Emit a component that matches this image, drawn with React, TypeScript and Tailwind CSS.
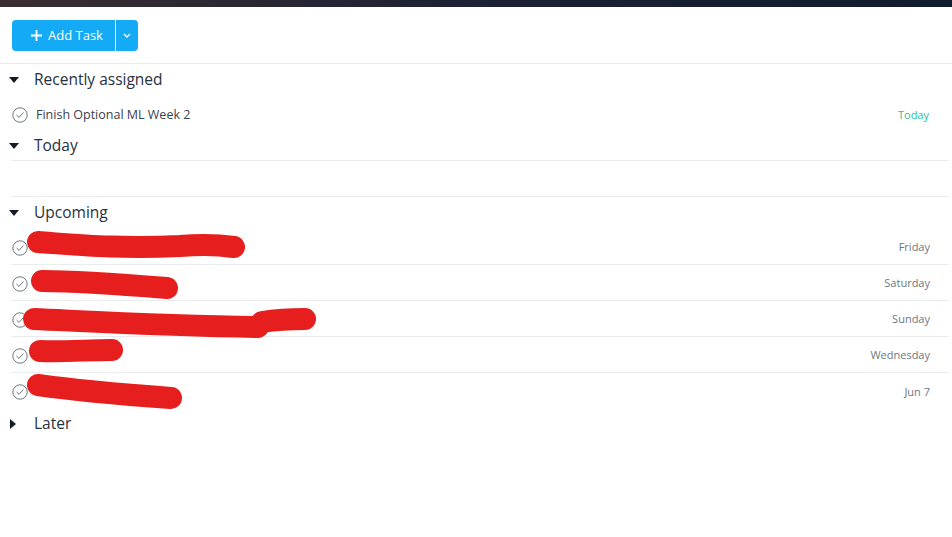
import React from "react";

const font = { fontFamily: '"Open Sans", "Noto Sans", sans-serif' };

function CheckCircle() {
  return (
    <svg width="16" height="16" viewBox="0 0 16 16" className="shrink-0">
      <circle cx="8" cy="8" r="7.2" fill="none" stroke="#6f7782" strokeWidth="1" />
      <path d="M4.8 8.3 L7 10.4 L11.2 5.8" fill="none" stroke="#6f7782" strokeWidth="1" strokeLinecap="round" strokeLinejoin="round" />
    </svg>
  );
}

function Caret({ open }: { open: boolean }) {
  return (
    <div className="w-[34px] flex items-center pl-[9px] shrink-0">
      {open ? (
        <svg width="10" height="6" viewBox="0 0 10 6">
          <path d="M0 0 L10 0 L5 6 Z" fill="#151b26" />
        </svg>
      ) : (
        <svg width="6" height="10" viewBox="0 0 6 10" className="ml-[1px]">
          <path d="M0 0 L6 5 L0 10 Z" fill="#151b26" />
        </svg>
      )}
    </div>
  );
}

function Header({ title, open, h }: { title: string; open: boolean; h: string }) {
  return (
    <div className={`flex items-center ${h}`}>
      <Caret open={open} />
      <span className="text-[15.5px] text-[#273240] font-medium" style={font}>{title}</span>
    </div>
  );
}

function Scribble({ d }: { d: string[] }) {
  return (
    <svg width="320" height="36" viewBox="0 0 320 36" className="absolute left-0 top-0 overflow-visible pointer-events-none">
      {d.map((p, i) => (
        <path key={i} d={p} fill="none" stroke="#e61e1e" strokeWidth="22" strokeLinecap="round" strokeLinejoin="round" />
      ))}
    </svg>
  );
}

type Row = { scribble: string[]; date: string; border: boolean };

const upcoming: Row[] = [
  { scribble: ["M38 13 C 80 16, 120 20, 180 17 C 205 15, 220 16, 234 18"], date: "Friday", border: true },
  { scribble: ["M42 16 C 80 16, 130 20, 167 23"], date: "Saturday", border: true },
  { scribble: ["M34 18 C 100 21, 170 25, 258 26", "M262 21 C 275 19, 290 18, 305 18"], date: "Sunday", border: true },
  { scribble: ["M40 14 C 60 15, 90 13, 112 13"], date: "Wednesday", border: true },
  { scribble: ["M38 12 C 80 18, 130 22, 171 25"], date: "Jun 7", border: false },
];

export default function App() {
  return (
    <div className="w-[952px] h-[537px] bg-white overflow-hidden" style={font}>
      <div className="h-[7px] bg-gradient-to-r from-[#3a2d30] via-[#1c2134] to-[#121c2f]" />
      <div className="h-[57px] flex items-center pl-[12px] border-b border-[#e8ecee]">
        <div className="flex h-[31px] rounded-[4px] overflow-hidden">
          <button className="flex items-center h-full w-[103px] bg-[#14aaf5] text-white text-[13px] pl-[18px] gap-[5px]">
            <svg width="13" height="13" viewBox="0 0 13 13">
              <path d="M6.5 1 V12 M1 6.5 H12" stroke="white" strokeWidth="1.8" />
            </svg>
            <span className="pt-[2px]" style={font}>Add Task</span>
          </button>
          <div className="w-px bg-white/80" />
          <button className="flex items-center justify-center h-full w-[22px] bg-[#14aaf5]">
            <svg width="8" height="5" viewBox="0 0 8 5">
              <path d="M1 1 L4 4 L7 1" fill="none" stroke="white" strokeWidth="1.4" />
            </svg>
          </button>
        </div>
      </div>

      <Header title="Recently assigned" open h="h-[31px]" />
      <div className="relative h-[37px] pt-[3px] ml-[12px] mr-[4px] flex items-center">
        <CheckCircle />
        <span className="ml-[8px] text-[12.5px] text-[#3b4150]">Finish Optional ML Week 2</span>
        <span className="ml-auto mr-[19px] text-[11px] text-[#1fc49e]">Today</span>
      </div>

      <Header title="Today" open h="h-[28px]" />
      <div className="h-[37px] ml-[12px] mr-[4px] border-y border-[#e8ecee]" />

      <Header title="Upcoming" open h="h-[32px]" />
      {upcoming.map((r, i) => (
        <div
          key={i}
          className={`relative h-[36px] pt-[2px] ml-[12px] mr-[4px] flex items-center ${r.border ? "border-b border-[#e8ecee]" : ""}`}
        >
          <CheckCircle />
          <div className="absolute left-[-12px] top-0">
            <Scribble d={r.scribble} />
          </div>
          <span className="ml-auto mr-[18px] text-[11px] text-[#6f7782]">{r.date}</span>
        </div>
      ))}

      <Header title="Later" open={false} h="h-[30px]" />
    </div>
  );
}
